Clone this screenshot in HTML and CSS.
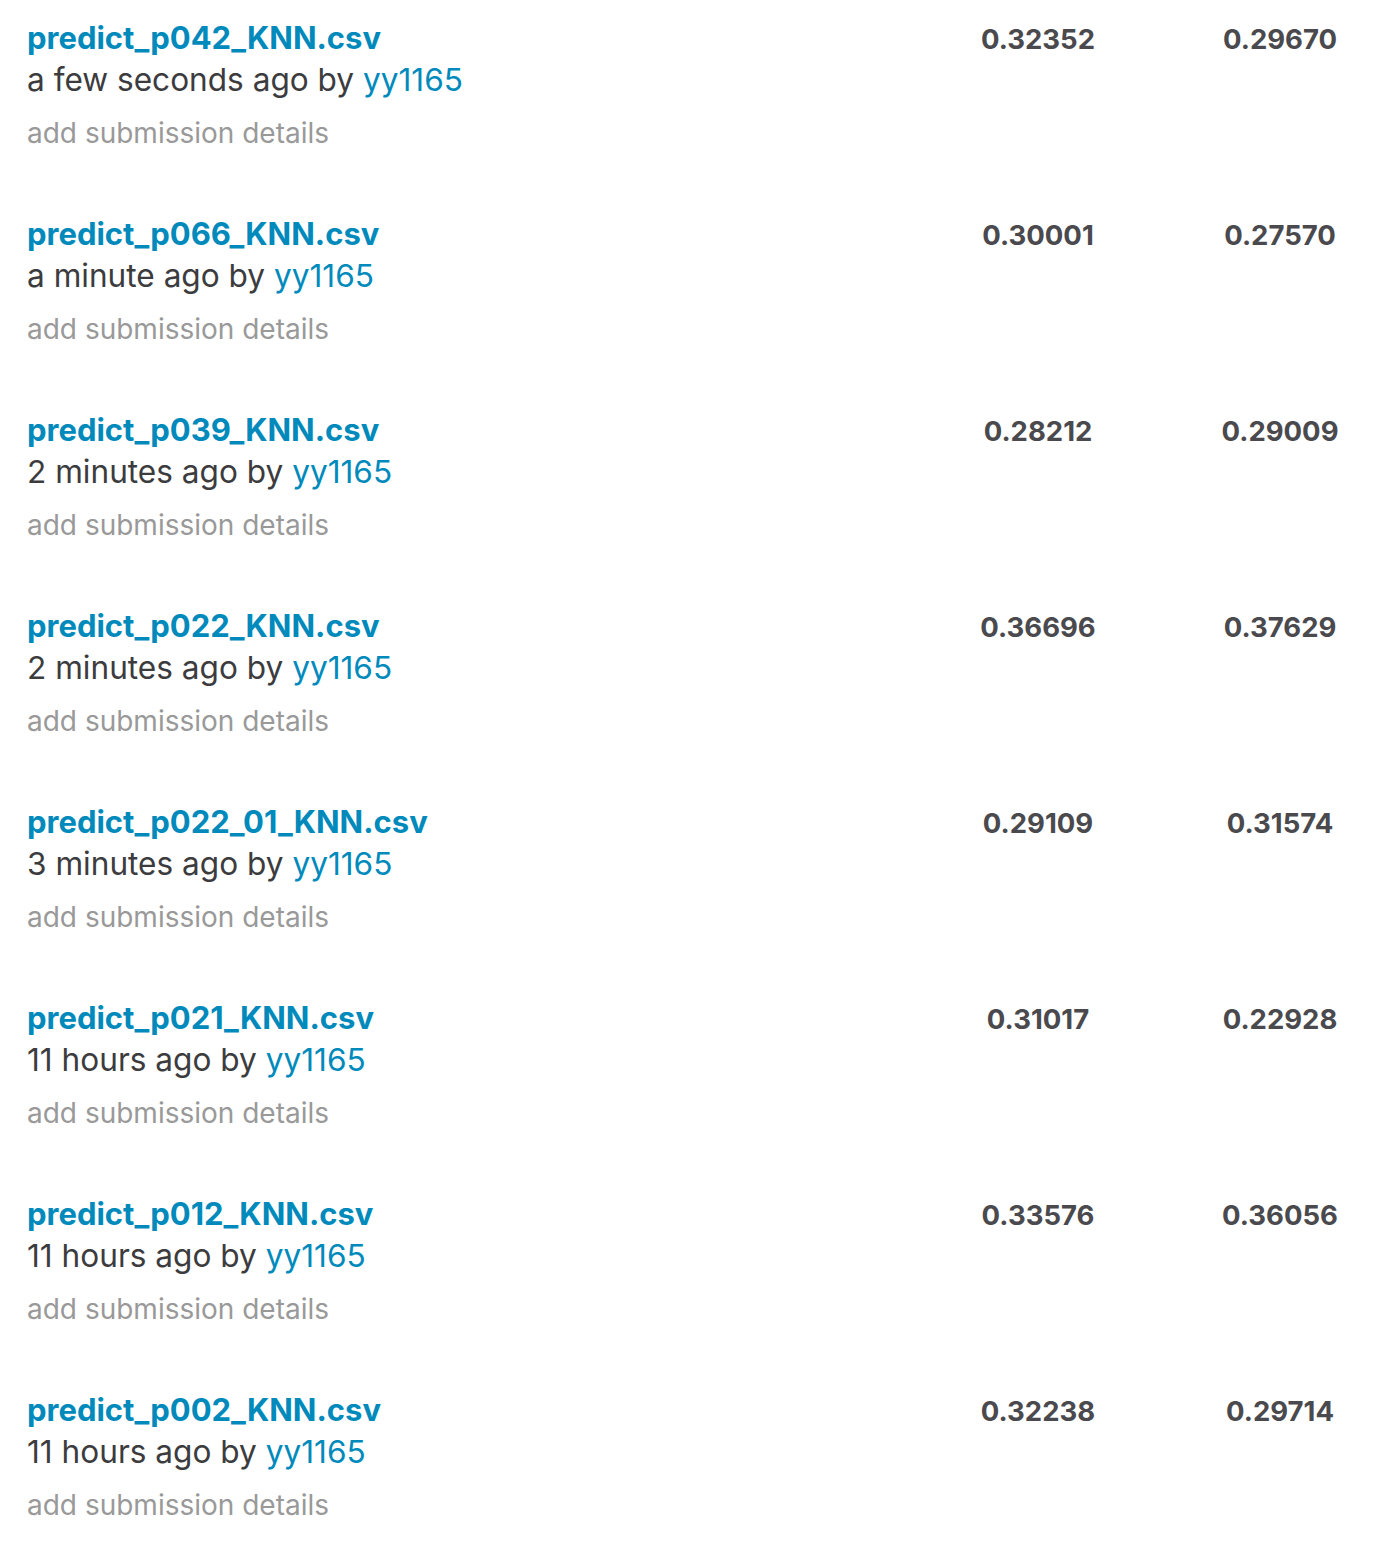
FILE: index.html
```html
<!DOCTYPE html>
<html>
<head>
<meta charset="utf-8">
<link rel="stylesheet" href="styles.css">
</head>
<body>
<div class="list">
  <div class="row">
    <div class="info">
      <a class="file">predict_p042_KNN.csv</a>
      <div class="meta">a few seconds ago by <a class="user">yy1165</a></div>
      <div class="details">add submission details</div>
    </div>
    <div class="score">0.32352</div>
    <div class="score">0.29670</div>
  </div>
  <div class="row">
    <div class="info">
      <a class="file">predict_p066_KNN.csv</a>
      <div class="meta">a minute ago by <a class="user">yy1165</a></div>
      <div class="details">add submission details</div>
    </div>
    <div class="score">0.30001</div>
    <div class="score">0.27570</div>
  </div>
  <div class="row">
    <div class="info">
      <a class="file">predict_p039_KNN.csv</a>
      <div class="meta">2 minutes ago by <a class="user">yy1165</a></div>
      <div class="details">add submission details</div>
    </div>
    <div class="score">0.28212</div>
    <div class="score">0.29009</div>
  </div>
  <div class="row">
    <div class="info">
      <a class="file">predict_p022_KNN.csv</a>
      <div class="meta">2 minutes ago by <a class="user">yy1165</a></div>
      <div class="details">add submission details</div>
    </div>
    <div class="score">0.36696</div>
    <div class="score">0.37629</div>
  </div>
  <div class="row">
    <div class="info">
      <a class="file">predict_p022_01_KNN.csv</a>
      <div class="meta">3 minutes ago by <a class="user">yy1165</a></div>
      <div class="details">add submission details</div>
    </div>
    <div class="score">0.29109</div>
    <div class="score">0.31574</div>
  </div>
  <div class="row">
    <div class="info">
      <a class="file">predict_p021_KNN.csv</a>
      <div class="meta">11 hours ago by <a class="user">yy1165</a></div>
      <div class="details">add submission details</div>
    </div>
    <div class="score">0.31017</div>
    <div class="score">0.22928</div>
  </div>
  <div class="row">
    <div class="info">
      <a class="file">predict_p012_KNN.csv</a>
      <div class="meta">11 hours ago by <a class="user">yy1165</a></div>
      <div class="details">add submission details</div>
    </div>
    <div class="score">0.33576</div>
    <div class="score">0.36056</div>
  </div>
  <div class="row">
    <div class="info">
      <a class="file">predict_p002_KNN.csv</a>
      <div class="meta">11 hours ago by <a class="user">yy1165</a></div>
      <div class="details">add submission details</div>
    </div>
    <div class="score">0.32238</div>
    <div class="score">0.29714</div>
  </div>
</div>
</body>
</html>
```
FILE: styles.css
```css
html, body {
  margin: 0;
  padding: 0;
  background: #ffffff;
}
body {
  font-family: "Inter", "Liberation Sans", Arial, sans-serif;
  color: #3c3c3f;
}
.list {
  display: flex;
  flex-direction: column;
}
.row {
  display: grid;
  grid-template-columns: 1fr 200px 196px;
  column-gap: 44px;
  height: 196px;
  box-sizing: border-box;
  padding-left: 27px;
  padding-top: 17px;
}
.info {
  display: flex;
  flex-direction: column;
}
.file {
  color: #008abc;
  font-weight: 700;
  font-size: 31px;
  line-height: 42px;
}
.meta {
  font-size: 31.6px;
  line-height: 42px;
  color: #3c3c3f;
}
.user {
  color: #008abc;
}
.details {
  margin-top: 15px;
  font-size: 28px;
  line-height: 34px;
  color: #999999;
}
.score {
  text-align: center;
  font-weight: 700;
  font-size: 27.5px;
  line-height: 44px;
  color: #4a4a4e;
}
```
